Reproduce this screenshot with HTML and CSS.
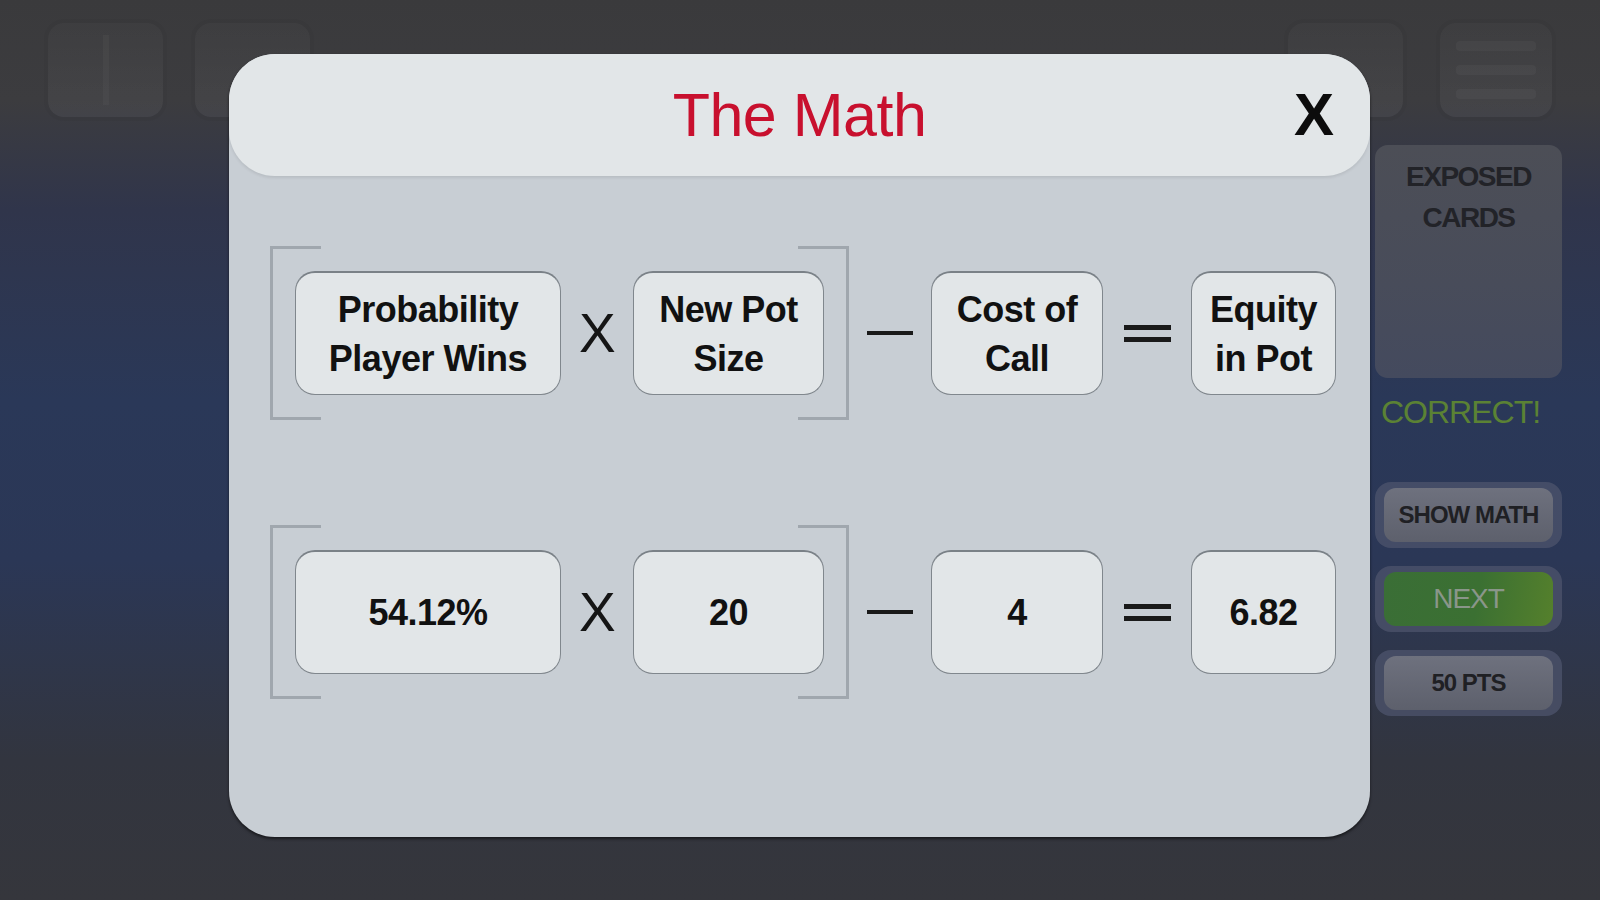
FILE: index.html
```html
<!DOCTYPE html>
<html lang="en">
<head>
    <meta charset="UTF-8">
    <meta name="viewport" content="width=device-width, initial-scale=1.0">
    <title>The Math</title>
    <link rel="stylesheet" href="styles.css">
</head>
<body>

    <div class="table">
        <div class="topbar">
            <div class="tiles">
                <div class="tile"><span class="tile-bar"></span></div>
                <div class="tile"></div>
            </div>
            <div class="tiles tiles-right">
                <div class="tile"></div>
                <div class="tile tile-menu">
                    <span></span><span></span><span></span>
                </div>
            </div>
        </div>

        <div class="side">
            <div class="exposed">EXPOSED<br>CARDS</div>
            <div class="result">CORRECT!</div>
            <div class="side-btns">
                <div class="btn"><span>SHOW MATH</span></div>
                <div class="btn btn-next"><span>NEXT</span></div>
                <div class="btn"><span>50 PTS</span></div>
            </div>
        </div>
    </div>

    <div class="modal">
        <div class="modal-header">
            <span></span>
            <h1 class="modal-title">The Math</h1>
            <button class="modal-close">X</button>
        </div>

        <div class="equation">
            <div class="group">
                <div class="box box-wide">Probability<br>Player Wins</div>
                <span class="op-x">X</span>
                <div class="box box-pot">New Pot<br>Size</div>
            </div>
            <span class="op-minus"></span>
            <div class="box box-call">Cost of<br>Call</div>
            <span class="op-equals"></span>
            <div class="box box-equity">Equity<br>in Pot</div>
        </div>

        <div class="equation equation-values">
            <div class="group">
                <div class="box box-wide">54.12%</div>
                <span class="op-x">X</span>
                <div class="box box-pot">20</div>
            </div>
            <span class="op-minus"></span>
            <div class="box box-call">4</div>
            <span class="op-equals"></span>
            <div class="box box-equity">6.82</div>
        </div>
    </div>

</body>
</html>
```

FILE: styles.css
```css
html, body {
    margin: 0;
    padding: 0;
}
body {
    width: 1600px;
    height: 900px;
    overflow: hidden;
    position: relative;
    font-family: "Liberation Sans", Arial, sans-serif;
    background: linear-gradient(180deg, #3a3a3c 0, #3c3c3f 100px, #30354b 210px, #2a3858 400px, #2b3756 560px, #32353f 760px, #35363c 900px);
}

/* background table screen */
.table {
    display: flex;
    flex-direction: column;
    height: 100%;
}
.topbar {
    display: flex;
    justify-content: space-between;
    padding: 23px 48px 0 48px;
}
.tiles {
    display: flex;
    gap: 32px;
}
.tiles-right {
    gap: 37px;
}
.tile {
    width: 115px;
    height: 94px;
    border-radius: 16px;
    background: linear-gradient(180deg, rgba(255, 255, 255, 0.015), rgba(255, 255, 255, 0.045));
    box-shadow: 0 0 0 4px rgba(0, 0, 0, 0.03);
    display: flex;
    flex-direction: column;
    align-items: center;
    justify-content: center;
}
.tile-bar {
    width: 6px;
    height: 70px;
    background: rgba(255, 255, 255, 0.03);
}
.tile-menu {
    width: 112px;
    gap: 14px;
}
.tile-menu span {
    width: 80px;
    height: 10px;
    border-radius: 4px;
    background: rgba(255, 255, 255, 0.035);
}

.side {
    align-self: flex-end;
    width: 187px;
    margin: 28px 38px 0 0;
}
.exposed {
    height: 233px;
    box-sizing: border-box;
    padding-top: 11px;
    border-radius: 13px;
    background: linear-gradient(180deg, #4c4e56 0, #484c5a 60%, #444a5e 100%);
    color: #222328;
    font-size: 28px;
    font-weight: bold;
    line-height: 41px;
    text-align: center;
    letter-spacing: -1.5px;
}
.result {
    margin-top: 14px;
    padding-left: 6px;
    height: 40px;
    font-size: 32px;
    line-height: 40px;
    color: #5b8234;
    letter-spacing: -1px;
}
.side-btns {
    margin-top: 50px;
    display: flex;
    flex-direction: column;
    gap: 18px;
}
.btn {
    padding: 6px 9px;
    border-radius: 16px;
    background: rgba(78, 84, 108, 0.75);
}
.btn span {
    display: flex;
    align-items: center;
    justify-content: center;
    height: 54px;
    border-radius: 12px;
    background: linear-gradient(180deg, #6e717e, #5d606c);
    color: #1f2024;
    font-size: 24px;
    font-weight: bold;
    letter-spacing: -1px;
}
.btn-next span {
    background: linear-gradient(100deg, #3a6e36 0, #3b7032 55%, #55802c 100%);
    color: #8a968a;
    font-weight: normal;
    font-size: 28px;
}

/* the math popup */
.modal {
    position: absolute;
    left: 229px;
    top: 54px;
    width: 1141px;
    height: 783px;
    border-radius: 46px;
    background: #c8ced4;
    box-shadow: 0 2px 3px rgba(0, 0, 0, 0.55);
}
.modal-header {
    display: grid;
    grid-template-columns: 1fr auto 1fr;
    align-items: center;
    height: 122px;
    border-radius: 46px;
    background: #e2e6e8;
    box-shadow: 0 2px 3px rgba(0, 0, 0, 0.08);
}
.modal-title {
    margin: 0;
    font-size: 61px;
    font-weight: normal;
    color: #c8102e;
    letter-spacing: -0.5px;
}
.modal-close {
    justify-self: end;
    margin-right: 36px;
    padding: 0;
    border: none;
    background: none;
    font-family: "Liberation Sans", Arial, sans-serif;
    font-size: 60px;
    font-weight: bold;
    line-height: 1;
    color: #0c0c0c;
    cursor: pointer;
}

.equation {
    display: flex;
    align-items: center;
    gap: 18px;
    margin: 70px 0 0 41px;
}
.equation-values {
    margin-top: 105px;
}
.group {
    position: relative;
    display: flex;
    align-items: center;
    gap: 18px;
    padding: 25px;
}
.group::before,
.group::after {
    content: '';
    position: absolute;
    top: 0;
    bottom: 0;
    width: 48px;
    border: 3px solid #a0a7ae;
}
.group::before {
    left: 0;
    border-right: none;
}
.group::after {
    right: 0;
    border-left: none;
}

.box {
    height: 124px;
    box-sizing: border-box;
    display: flex;
    align-items: center;
    justify-content: center;
    text-align: center;
    border: 1px solid #80878d;
    border-top: 2px solid #7a8187;
    border-radius: 20px;
    background: #e2e6e8;
    color: #111;
    font-size: 36px;
    font-weight: bold;
    line-height: 49px;
    letter-spacing: -0.5px;
}
.box-wide {
    width: 266px;
}
.box-pot {
    width: 191px;
}
.box-call {
    width: 172px;
}
.box-equity {
    width: 145px;
}

.op-x {
    width: 36px;
    text-align: center;
    font-size: 55px;
    line-height: 1;
    color: #151515;
}
.op-minus {
    width: 46px;
    height: 4px;
    background: #1a1a1a;
}
.op-equals {
    width: 47px;
    height: 7px;
    margin: 0 2px 0 3px;
    border-top: 5px solid #1a1a1a;
    border-bottom: 5px solid #1a1a1a;
}
```
